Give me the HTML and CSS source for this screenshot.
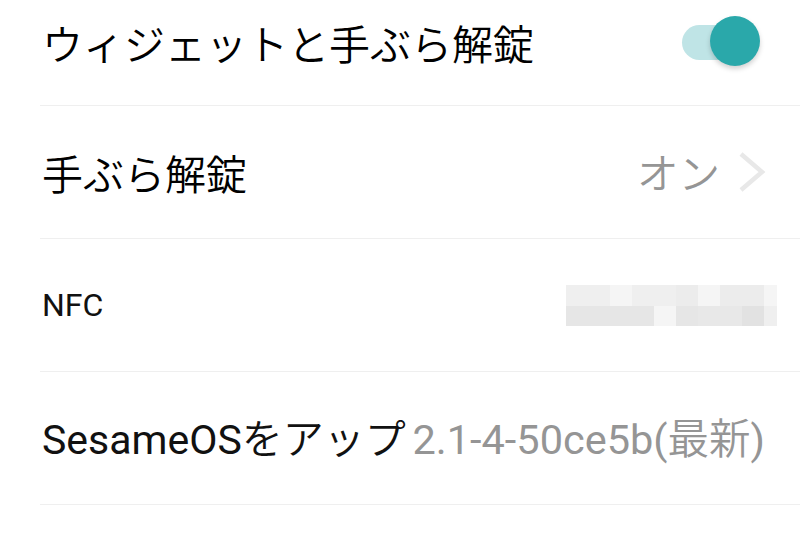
FILE: index.html
```html
<!DOCTYPE html>
<html lang="ja">
<head>
<meta charset="utf-8">
<link rel="stylesheet" href="styles.css">
</head>
<body>
<div class="list">
  <div class="row row-first">
    <span class="title jp">ウィジェットと手ぶら解錠</span>
    <span class="switch"><span class="track"></span><span class="knob"></span></span>
  </div>
  <div class="row">
    <span class="title jp">手ぶら解錠</span>
    <span class="value-wrap"><span class="value jp">オン</span>
      <svg class="chevron" width="30" height="42" viewBox="0 0 30 42"><path d="M4 3 L25 21 L4 39" fill="none" stroke="#e8e8e8" stroke-width="4.5" stroke-linejoin="miter"/></svg>
    </span>
  </div>
  <div class="row">
    <span class="title small">NFC</span>
    <span class="mosaic">
      <i class="a"></i><i class="a"></i><i class="c"></i><i class="a"></i><i class="a"></i><i class="b"></i><i class="c"></i><i class="b"></i><i class="b"></i><i class="c"></i>
      <i class="d"></i><i class="d"></i><i class="d"></i><i class="d"></i><i class="c"></i><i class="d"></i><i class="e"></i><i class="e"></i><i class="f"></i><i class="a"></i>
    </span>
  </div>
  <div class="row">
    <span class="title">SesameOS<span class="jp">をアップ</span></span>
    <span class="value ver">2.1-4-50ce5b(<span class="jp">最新</span>)</span>
  </div>
</div>
</body>
</html>
```
FILE: styles.css
```css
html, body {
  margin: 0;
  padding: 0;
  background: #ffffff;
}
body {
  width: 800px;
  height: 540px;
  overflow: hidden;
  font-family: Roboto, "Noto Sans CJK JP", sans-serif;
}
.list {
  margin-left: 40px;
}
.row {
  height: 132px;
  border-bottom: 1px solid #efefef;
  display: flex;
  align-items: center;
  justify-content: space-between;
  padding-left: 2px;
  padding-right: 23px;
  white-space: nowrap;
}
.row-first {
  box-sizing: border-box;
  height: 106px;
  padding-bottom: 20px;
}
.title {
  font-size: 41px;
  color: #111111;
  line-height: 1;
}
.jp {
  font-family: "Noto Sans CJK JP", sans-serif;
  font-weight: 350;
}
.title.jp {
  color: #000000;
}
.title.small {
  font-size: 32px;
}
.value {
  font-size: 41.5px;
  color: #959595;
  line-height: 1;
}
.value-wrap {
  display: flex;
  align-items: center;
  gap: 17px;
  margin-right: 10px;
}
.ver {
  margin-right: 12px;
}
.switch {
  position: relative;
  width: 78px;
  height: 50px;
  margin-right: 17px;
  margin-top: -4px;
}
.track {
  position: absolute;
  left: 0;
  top: 9px;
  width: 70px;
  height: 35px;
  border-radius: 18px;
  background: #bfe4e6;
}
.knob {
  position: absolute;
  right: 0;
  top: 0;
  width: 50px;
  height: 50px;
  border-radius: 50%;
  background: #2aa8aa;
  box-shadow: 0 3px 5px rgba(0, 0, 0, 0.18);
}
.mosaic {
  display: grid;
  grid-template-columns: repeat(9, 22px) 13px;
  grid-template-rows: 21px 20px;
}
.mosaic i { display: block; }
.mosaic .a { background: #efefef; }
.mosaic .b { background: #ececec; }
.mosaic .c { background: #f5f5f5; }
.mosaic .d { background: #e6e6e6; }
.mosaic .e { background: #e8e8e8; }
.mosaic .f { background: #e2e2e2; }
```
